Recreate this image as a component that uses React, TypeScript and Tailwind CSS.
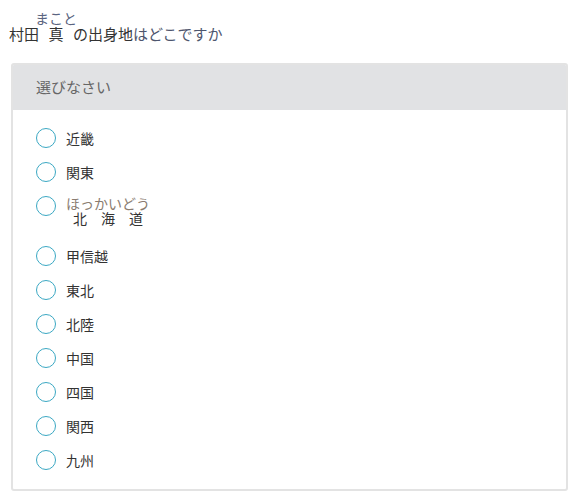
const OPTIONS: { label: string; reading?: string }[] = [
  { label: "近畿" },
  { label: "関東" },
  { label: "北海道", reading: "ほっかいどう" },
  { label: "甲信越" },
  { label: "東北" },
  { label: "北陸" },
  { label: "中国" },
  { label: "四国" },
  { label: "関西" },
  { label: "九州" },
];

function Radio() {
  return (
    <span className="block h-5 w-5 shrink-0 rounded-full border-[1.5px] border-[#3ba8c3] bg-white" />
  );
}

export default function App() {
  return (
    <div
      className="min-h-[498px] bg-white text-[#333]"
      style={{ fontFamily: '"Noto Sans CJK JP", "Noto Sans", sans-serif' }}
    >
      <div className="pl-[9px] pt-[24px] text-[15px] leading-[20px]">
        村田
        <ruby className="mx-[3px]">
          真<rt className="text-[14px] leading-[18px] text-[#5a6480]">まこと</rt>
        </ruby>
        の出身地<span className="text-[#4e566e]">はどこですか</span>
      </div>

      <div className="ml-[11px] mr-[9px] mt-[19px] overflow-hidden rounded-[3px] border-2 border-[#e3e3e3]">
        <div className="flex h-[45px] items-center bg-[#e1e2e4] pl-[23px] text-[15px] text-[#666]">
          選びなさい
        </div>
        <div className="flex flex-col gap-[14px] pb-[19px] pl-[23px] pt-[18px]">
          {OPTIONS.map(opt => (
            <label key={opt.label} className="flex items-start gap-[10px]">
              <Radio />
              <span className={`text-[14px] leading-[20px] text-[#333] ${opt.reading ? "pb-[4px]" : ""}`}>
                {opt.reading ? (
                  <ruby>
                    {opt.label}
                    <rt className="text-[14px] leading-[19px] text-[#8a7c70]">{opt.reading}</rt>
                  </ruby>
                ) : (
                  opt.label
                )}
              </span>
            </label>
          ))}
        </div>
      </div>
    </div>
  );
}
